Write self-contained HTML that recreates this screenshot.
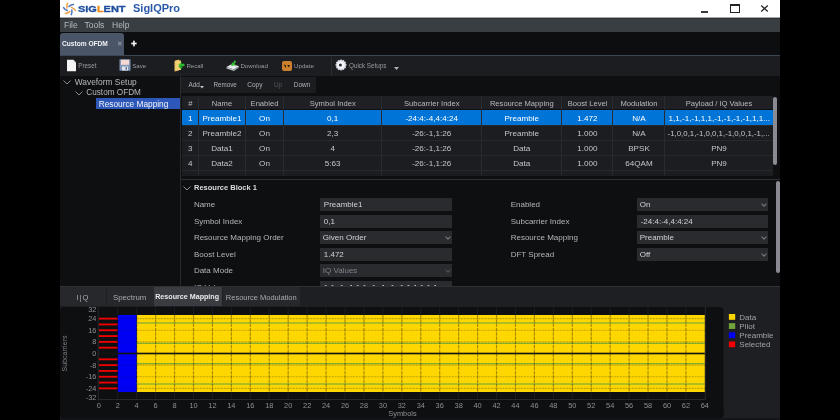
<!DOCTYPE html>
<html><head><meta charset="utf-8">
<style>
*{margin:0;padding:0;box-sizing:border-box}
html,body{width:840px;height:420px;overflow:hidden;background:#000;font-family:"Liberation Sans",sans-serif}
.a{position:absolute}
.t{position:absolute;white-space:nowrap;line-height:1}
#app{position:absolute;left:60px;top:0;width:720px;height:420px;background:#0e0f11;overflow:hidden;will-change:transform}
</style></head><body>
<div id="app">
  <!-- title bar -->
  <div class="a" style="left:0;top:0;width:720px;height:18px;background:#fff"></div>
  <div class="t" style="left:18px;top:4.2px;font-size:9.4px;font-weight:bold;color:#1d4d9e;transform:scaleX(1.17);transform-origin:0 0;-webkit-text-stroke:0.3px #1d4d9e">SIG<span style="color:#ee8c1c;-webkit-text-stroke:0.3px #ee8c1c">L</span>ENT</div>
  <div class="t" style="left:73px;top:3.3px;font-size:11px;font-weight:bold;color:#2b59aa">SigIQPro</div>
  <svg class="a" style="left:0;top:0" width="20" height="18" viewBox="0 0 20 18"><path d="M6.97 8.07 Q6.53 4.90 7.65 3.26" fill="none" stroke="#f0a040" stroke-width="1.5" stroke-linecap="round"/><path d="M8.99 6.43 Q11.51 4.47 13.49 4.61" fill="none" stroke="#4a78c0" stroke-width="1.5" stroke-linecap="round"/><path d="M11.42 7.36 Q14.38 8.56 15.25 10.35" fill="none" stroke="#f0a040" stroke-width="1.5" stroke-linecap="round"/><path d="M11.83 9.93 Q12.27 13.10 11.15 14.74" fill="none" stroke="#4a78c0" stroke-width="1.5" stroke-linecap="round"/><path d="M9.81 11.57 Q7.29 13.53 5.31 13.39" fill="none" stroke="#f0a040" stroke-width="1.5" stroke-linecap="round"/><path d="M7.38 10.64 Q4.42 9.44 3.55 7.65" fill="none" stroke="#4a78c0" stroke-width="1.5" stroke-linecap="round"/></svg>
  <!-- window buttons -->
  <div class="a" style="left:641px;top:11px;width:6.8px;height:1.5px;background:#3a3a3a"></div>
  <div class="a" style="left:670px;top:4px;width:10px;height:8.5px;border:1px solid #222;border-top-width:2px"></div>
  <svg class="a" style="left:700px;top:5px" width="9" height="7" viewBox="0 0 9 7"><path d="M1.2 0.6 L7.8 6.4 M7.8 0.6 L1.2 6.4" stroke="#2a2a2a" stroke-width="1.35"/></svg>

  <!-- menu bar -->
  <div class="a" style="left:0;top:17px;width:720px;height:1px;background:#a4a6a8"></div>
  <div class="a" style="left:0;top:18px;width:720px;height:14px;background:#393e43"></div>
  <div class="a" style="left:0;top:18px;width:720px;height:1px;background:#2f3338"></div>
  <div class="t" style="left:4px;top:21.2px;font-size:8.5px;color:#b6babe">File</div>
  <div class="t" style="left:24.5px;top:21.2px;font-size:8.5px;color:#b6babe">Tools</div>
  <div class="t" style="left:52px;top:21.2px;font-size:8.5px;color:#b6babe">Help</div>

  <!-- tab bar -->
  <div class="a" style="left:0;top:32px;width:720px;height:23px;background:#0d0e10"></div>
  <div class="a" style="left:0;top:33px;width:64px;height:22px;background:#4a5567;border-radius:3px 3px 0 0"></div>
  <div class="t" style="left:2px;top:40.5px;font-size:6.6px;font-weight:bold;color:#f0f2f4">Custom OFDM</div>
  <div class="t" style="left:56.5px;top:40px;font-size:7px;color:#a0a8b2">✕</div>
  <div class="t" style="left:70.8px;top:40.5px;font-size:6.5px;font-weight:bold;color:#f4f4f4">✚</div>
  <div class="a" style="left:0;top:55px;width:720px;height:1px;background:#3c4654"></div>

  <!-- toolbar -->
  <div class="a" style="left:0;top:56px;width:720px;height:20px;background:#1c1d20"></div>

  <!-- toolbar icons -->
  <svg class="a" style="left:6px;top:59px" width="11" height="13" viewBox="0 0 11 13">
    <path d="M1 0.8 H7.3 L10 3.5 V12.2 H1 Z" fill="#f4f4f4"/>
    <path d="M7.3 0.8 V3.5 H10" fill="#d8d8d8"/>
  </svg>
  <div class="t" style="left:18.2px;top:62.8px;font-size:6.3px;color:#9a9ca2">Preset</div>
  <svg class="a" style="left:58.5px;top:59.3px" width="12" height="12" viewBox="0 0 12 12">
    <rect x="0.5" y="0.3" width="11" height="11.4" fill="#8197b8"/>
    <rect x="2" y="0.8" width="8" height="5" fill="#f3d9d2"/>
    <rect x="3" y="7.5" width="6" height="4" fill="#dfe3ea"/>
    <rect x="6.5" y="8.2" width="1.5" height="2.5" fill="#5a6f90"/>
  </svg>
  <div class="t" style="left:72.2px;top:62.8px;font-size:6.1px;color:#9a9ca2">Save</div>
  <svg class="a" style="left:113.5px;top:59px" width="11" height="13" viewBox="0 0 11 13">
    <path d="M0.5 2 L5 0.5 V11.5 L0.5 12.5 Z" fill="#e8c060"/>
    <path d="M1.5 1.5 H7 V11 H1.5 Z" fill="#f0d070"/>
    <path d="M4.5 6 L7.5 3 V4.8 H10.5 V7.3 H7.5 V9 Z" fill="#2fb82f"/>
    <path d="M4 7 L7 10 L9 8 Z" fill="#1e9e1e"/>
  </svg>
  <div class="t" style="left:126.4px;top:62.8px;font-size:6.1px;color:#9a9ca2">Recall</div>
  <svg class="a" style="left:165.5px;top:59.5px" width="14" height="12" viewBox="0 0 14 12">
    <path d="M0.5 7 L5 4.5 L13 6 L8 9.5 Z" fill="#e8ecee"/>
    <path d="M0.5 7 L8 9.5 L8 11 L0.5 8.5 Z" fill="#b8bcc0"/>
    <path d="M8 9.5 L13 6 V7.5 L8 11 Z" fill="#9aa0a4"/>
    <path d="M8.5 0.3 L10.2 1.8 L8.3 3.8 L9.8 5 L5.2 6.2 L6 2.2 L7.2 3.2 Z" fill="#36c436"/>
  </svg>
  <div class="t" style="left:180.4px;top:62.8px;font-size:6.2px;color:#9a9ca2">Download</div>
  <div class="a" style="left:222px;top:60.6px;width:10px;height:10px;background:#cc812f;border-radius:2px"></div>
  <svg class="a" style="left:222px;top:60.6px" width="10" height="10" viewBox="0 0 10 10"><path d="M2.2 3.6 L3.6 5.6 M3.4 4.2 V6.4" stroke="#2a1a08" stroke-width="1"/><path d="M5.2 4 L8 4 L6.8 6.6 Z" fill="#2a1a08"/></svg>
  <div class="t" style="left:234px;top:62.8px;font-size:6.2px;color:#9a9ca2">Update</div>
  <div class="a" style="left:270.5px;top:57px;width:1px;height:18px;background:#2c2d31"></div>
  <svg class="a" style="left:275.4px;top:59.2px" width="12" height="12" viewBox="0 0 12 12"><rect x="5.2" y="0.5" width="1.6" height="1.6" fill="#d8d8ea" transform="rotate(0 6 6)"/><rect x="5.2" y="0.5" width="1.6" height="1.6" fill="#d8d8ea" transform="rotate(30 6 6)"/><rect x="5.2" y="0.5" width="1.6" height="1.6" fill="#d8d8ea" transform="rotate(60 6 6)"/><rect x="5.2" y="0.5" width="1.6" height="1.6" fill="#d8d8ea" transform="rotate(90 6 6)"/><rect x="5.2" y="0.5" width="1.6" height="1.6" fill="#d8d8ea" transform="rotate(120 6 6)"/><rect x="5.2" y="0.5" width="1.6" height="1.6" fill="#d8d8ea" transform="rotate(150 6 6)"/><rect x="5.2" y="0.5" width="1.6" height="1.6" fill="#d8d8ea" transform="rotate(180 6 6)"/><rect x="5.2" y="0.5" width="1.6" height="1.6" fill="#d8d8ea" transform="rotate(210 6 6)"/><rect x="5.2" y="0.5" width="1.6" height="1.6" fill="#d8d8ea" transform="rotate(240 6 6)"/><rect x="5.2" y="0.5" width="1.6" height="1.6" fill="#d8d8ea" transform="rotate(270 6 6)"/><rect x="5.2" y="0.5" width="1.6" height="1.6" fill="#d8d8ea" transform="rotate(300 6 6)"/><rect x="5.2" y="0.5" width="1.6" height="1.6" fill="#d8d8ea" transform="rotate(330 6 6)"/><circle cx="6" cy="6" r="4.8" fill="#e6e6f2"/><circle cx="6" cy="6" r="3.2" fill="#f6f6fb"/><circle cx="5.4" cy="6" r="1.5" fill="#2a2a34"/></svg>
  <div class="t" style="left:289px;top:62.8px;font-size:6.3px;color:#9a9ca2">Quick Setups</div>
  <svg class="a" style="left:333.5px;top:66.5px" width="5" height="3" viewBox="0 0 5 3"><path d="M0 0 H5 L2.5 3 Z" fill="#b0b2b8"/></svg>

  <!-- tree -->
  <div class="a" style="left:120px;top:76px;width:1px;height:210px;background:#2a2b2f"></div>
  <svg class="a" style="left:3px;top:80px" width="8" height="5" viewBox="0 0 8 5"><path d="M0.5 0.5 L4 4 L7.5 0.5" fill="none" stroke="#9a9a9e" stroke-width="0.9"/></svg>
  <div class="t" style="left:14.7px;top:78.3px;font-size:8.4px;color:#b8b8bc">Waveform Setup</div>
  <svg class="a" style="left:15px;top:91px" width="8" height="5" viewBox="0 0 8 5"><path d="M0.5 0.5 L4 4 L7.5 0.5" fill="none" stroke="#9a9a9e" stroke-width="0.9"/></svg>
  <div class="t" style="left:26.3px;top:89.4px;font-size:8.2px;color:#b8b8bc">Custom OFDM</div>
  <div class="a" style="left:36.2px;top:98.2px;width:83.8px;height:10.9px;background:#2d58b9"></div>
  <div class="t" style="left:38.7px;top:99.9px;font-size:8.3px;color:#f2f4f8">Resource Mapping</div>

  <!-- sub toolbar -->
  <div class="a" style="left:121px;top:77px;width:135px;height:16px;background:#1c1d20"></div>
  <div class="t" style="left:128.4px;top:81.8px;font-size:6.4px;color:#b0b2b8">Add</div>
  <svg class="a" style="left:139.5px;top:85.5px" width="4" height="3" viewBox="0 0 4 3"><path d="M0 0 H4 L2 2.5 Z" fill="#c0c2c8"/></svg>
  <div class="t" style="left:153.4px;top:81.8px;font-size:6.3px;color:#b0b2b8">Remove</div>
  <div class="t" style="left:187.3px;top:81.8px;font-size:6.5px;color:#b0b2b8">Copy</div>
  <div class="t" style="left:214px;top:81.8px;font-size:6.4px;color:#55575c">Up</div>
  <div class="t" style="left:233.8px;top:81.8px;font-size:6.5px;color:#b0b2b8">Down</div>

  <!-- table -->
  <div class="a" style="left:122px;top:96.3px;width:591px;height:13.2px;background:#1f2023"></div>
  <div class="a" style="left:122px;top:109.5px;width:591px;height:66px;background:#1c1d20"></div>
  <div class="a" style="left:122px;top:109.8px;width:591px;height:14.9px;background:#0174d7"></div>
  <div class="a" style="left:122px;top:125px;width:591px;height:1px;background:#28292d"></div>
  <div class="a" style="left:122px;top:140px;width:591px;height:1px;background:#28292d"></div>
  <div class="a" style="left:122px;top:155px;width:591px;height:1px;background:#28292d"></div>
  <div class="a" style="left:122px;top:170px;width:591px;height:1px;background:#28292d"></div>
  <div class="a" style="left:138px;top:96px;width:1px;height:79px;background:#2a2b2f"></div>
  <div class="a" style="left:185px;top:96px;width:1px;height:79px;background:#2a2b2f"></div>
  <div class="a" style="left:223px;top:96px;width:1px;height:79px;background:#2a2b2f"></div>
  <div class="a" style="left:321px;top:96px;width:1px;height:79px;background:#2a2b2f"></div>
  <div class="a" style="left:421px;top:96px;width:1px;height:79px;background:#2a2b2f"></div>
  <div class="a" style="left:501px;top:96px;width:1px;height:79px;background:#2a2b2f"></div>
  <div class="a" style="left:552px;top:96px;width:1px;height:79px;background:#2a2b2f"></div>
  <div class="a" style="left:604px;top:96px;width:1px;height:79px;background:#2a2b2f"></div>
  <div class="t" style="left:122px;width:16.5px;text-align:center;top:99.8px;font-size:7.6px;color:#b8babe">#</div>
  <div class="t" style="left:138.5px;width:47.0px;text-align:center;top:99.8px;font-size:7.6px;color:#b8babe">Name</div>
  <div class="t" style="left:185.5px;width:38.0px;text-align:center;top:99.8px;font-size:7.6px;color:#b8babe">Enabled</div>
  <div class="t" style="left:223.5px;width:98.5px;text-align:center;top:99.8px;font-size:7.6px;color:#b8babe">Symbol Index</div>
  <div class="t" style="left:322px;width:99.5px;text-align:center;top:99.8px;font-size:7.6px;color:#b8babe">Subcarrier Index</div>
  <div class="t" style="left:421.5px;width:80.5px;text-align:center;top:99.8px;font-size:7.6px;color:#b8babe">Resource Mapping</div>
  <div class="t" style="left:502px;width:51px;text-align:center;top:99.8px;font-size:7.6px;color:#b8babe">Boost Level</div>
  <div class="t" style="left:553px;width:52px;text-align:center;top:99.8px;font-size:7.6px;color:#b8babe">Modulation</div>
  <div class="t" style="left:605px;width:108px;text-align:center;top:99.8px;font-size:7.6px;color:#b8babe">Payload / IQ Values</div>
  <div class="t" style="left:122px;width:16.5px;text-align:center;top:114.5px;font-size:8.1px;color:#ffffff">1</div>
  <div class="t" style="left:138.5px;width:47.0px;text-align:center;top:114.5px;font-size:8.1px;color:#ffffff">Preamble1</div>
  <div class="t" style="left:185.5px;width:38.0px;text-align:center;top:114.5px;font-size:8.1px;color:#ffffff">On</div>
  <div class="t" style="left:223.5px;width:98.5px;text-align:center;top:114.5px;font-size:8.1px;color:#ffffff">0,1</div>
  <div class="t" style="left:322px;width:99.5px;text-align:center;top:114.5px;font-size:8.1px;color:#ffffff">-24:4:-4,4:4:24</div>
  <div class="t" style="left:421.5px;width:80.5px;text-align:center;top:114.5px;font-size:8.1px;color:#ffffff">Preamble</div>
  <div class="t" style="left:502px;width:51px;text-align:center;top:114.5px;font-size:8.1px;color:#ffffff">1.472</div>
  <div class="t" style="left:553px;width:52px;text-align:center;top:114.5px;font-size:8.1px;color:#ffffff">N/A</div>
  <div class="t" style="left:608.6px;top:114.5px;font-size:8.07px;color:#ffffff">1,1,-1,-1,1,1,-1,-1,-1,-1,1,1...</div>
  <div class="t" style="left:122px;width:16.5px;text-align:center;top:129.5px;font-size:8.1px;color:#c4c6ca">2</div>
  <div class="t" style="left:138.5px;width:47.0px;text-align:center;top:129.5px;font-size:8.1px;color:#c4c6ca">Preamble2</div>
  <div class="t" style="left:185.5px;width:38.0px;text-align:center;top:129.5px;font-size:8.1px;color:#c4c6ca">On</div>
  <div class="t" style="left:223.5px;width:98.5px;text-align:center;top:129.5px;font-size:8.1px;color:#c4c6ca">2,3</div>
  <div class="t" style="left:322px;width:99.5px;text-align:center;top:129.5px;font-size:8.1px;color:#c4c6ca">-26:-1,1:26</div>
  <div class="t" style="left:421.5px;width:80.5px;text-align:center;top:129.5px;font-size:8.1px;color:#c4c6ca">Preamble</div>
  <div class="t" style="left:502px;width:51px;text-align:center;top:129.5px;font-size:8.1px;color:#c4c6ca">1.000</div>
  <div class="t" style="left:553px;width:52px;text-align:center;top:129.5px;font-size:8.1px;color:#c4c6ca">N/A</div>
  <div class="t" style="left:607.6px;top:129.5px;font-size:7.85px;color:#c4c6ca">-1,0,0,1,-1,0,0,1,-1,0,0,1,-1,...</div>
  <div class="t" style="left:122px;width:16.5px;text-align:center;top:144.5px;font-size:8.1px;color:#c4c6ca">3</div>
  <div class="t" style="left:138.5px;width:47.0px;text-align:center;top:144.5px;font-size:8.1px;color:#c4c6ca">Data1</div>
  <div class="t" style="left:185.5px;width:38.0px;text-align:center;top:144.5px;font-size:8.1px;color:#c4c6ca">On</div>
  <div class="t" style="left:223.5px;width:98.5px;text-align:center;top:144.5px;font-size:8.1px;color:#c4c6ca">4</div>
  <div class="t" style="left:322px;width:99.5px;text-align:center;top:144.5px;font-size:8.1px;color:#c4c6ca">-26:-1,1:26</div>
  <div class="t" style="left:421.5px;width:80.5px;text-align:center;top:144.5px;font-size:8.1px;color:#c4c6ca">Data</div>
  <div class="t" style="left:502px;width:51px;text-align:center;top:144.5px;font-size:8.1px;color:#c4c6ca">1.000</div>
  <div class="t" style="left:553px;width:52px;text-align:center;top:144.5px;font-size:8.1px;color:#c4c6ca">BPSK</div>
  <div class="t" style="left:605px;width:108px;text-align:center;top:144.5px;font-size:8.1px;color:#c4c6ca">PN9</div>
  <div class="t" style="left:122px;width:16.5px;text-align:center;top:159.5px;font-size:8.1px;color:#c4c6ca">4</div>
  <div class="t" style="left:138.5px;width:47.0px;text-align:center;top:159.5px;font-size:8.1px;color:#c4c6ca">Data2</div>
  <div class="t" style="left:185.5px;width:38.0px;text-align:center;top:159.5px;font-size:8.1px;color:#c4c6ca">On</div>
  <div class="t" style="left:223.5px;width:98.5px;text-align:center;top:159.5px;font-size:8.1px;color:#c4c6ca">5:63</div>
  <div class="t" style="left:322px;width:99.5px;text-align:center;top:159.5px;font-size:8.1px;color:#c4c6ca">-26:-1,1:26</div>
  <div class="t" style="left:421.5px;width:80.5px;text-align:center;top:159.5px;font-size:8.1px;color:#c4c6ca">Data</div>
  <div class="t" style="left:502px;width:51px;text-align:center;top:159.5px;font-size:8.1px;color:#c4c6ca">1.000</div>
  <div class="t" style="left:553px;width:52px;text-align:center;top:159.5px;font-size:8.1px;color:#c4c6ca">64QAM</div>
  <div class="t" style="left:605px;width:108px;text-align:center;top:159.5px;font-size:8.1px;color:#c4c6ca">PN9</div>
  <div class="a" style="left:713px;top:96.5px;width:3.5px;height:68px;background:#8a8a92;border-radius:2px"></div>
  <div class="a" style="left:121px;top:179px;width:599px;height:1px;background:#2c2f35"></div>

  <!-- resource block panel -->
  <svg class="a" style="left:123px;top:185.5px" width="8" height="5" viewBox="0 0 8 5"><path d="M0.5 0.5 L4 4 L7.5 0.5" fill="none" stroke="#a0a0a4" stroke-width="0.9"/></svg>
  <div class="t" style="left:134px;top:184px;font-size:7.5px;font-weight:bold;color:#dcdde0">Resource Block 1</div>
  <div class="t" style="left:133.9px;top:201.2px;font-size:8px;color:#b4b6ba">Name</div>
  <div class="a" style="left:259.8px;top:198px;width:132.2px;height:13.4px;background:#2a2b2f"></div>
  <div class="t" style="left:263.8px;top:201.3px;font-size:8px;color:#d0d2d6">Preamble1</div>
  <div class="t" style="left:133.9px;top:217.7px;font-size:8px;color:#b4b6ba">Symbol Index</div>
  <div class="a" style="left:259.8px;top:214.5px;width:132.2px;height:13.4px;background:#2a2b2f"></div>
  <div class="t" style="left:263.8px;top:217.8px;font-size:8px;color:#d0d2d6">0,1</div>
  <div class="t" style="left:133.9px;top:234.2px;font-size:8px;color:#b4b6ba">Resource Mapping Order</div>
  <div class="a" style="left:259.8px;top:231px;width:132.2px;height:13.4px;background:#2a2b2f"></div>
  <div class="t" style="left:262.8px;top:234.3px;font-size:8px;color:#d0d2d6">Given Order</div>
  <svg class="a" style="left:384.7px;top:236.4px" width="6" height="4" viewBox="0 0 6 4"><path d="M0.6 0.6 L3 3.1 L5.4 0.6" fill="none" stroke="#76787e" stroke-width="1.1"/></svg>
  <div class="t" style="left:133.9px;top:250.7px;font-size:8px;color:#b4b6ba">Boost Level</div>
  <div class="a" style="left:259.8px;top:247.5px;width:132.2px;height:13.4px;background:#2a2b2f"></div>
  <div class="t" style="left:263.8px;top:250.8px;font-size:8px;color:#d0d2d6">1.472</div>
  <div class="t" style="left:133.9px;top:267.2px;font-size:8px;color:#b4b6ba">Data Mode</div>
  <div class="a" style="left:259.8px;top:264px;width:132.2px;height:13.4px;background:#2a2b2f"></div>
  <div class="t" style="left:262.8px;top:267.3px;font-size:8px;color:#808288">IQ Values</div>
  <svg class="a" style="left:384.7px;top:269.4px" width="6" height="4" viewBox="0 0 6 4"><path d="M0.6 0.6 L3 3.1 L5.4 0.6" fill="none" stroke="#505257" stroke-width="1.1"/></svg>
  <div class="t" style="left:133.9px;top:283.7px;font-size:8px;color:#b4b6ba">IQ Values</div>
  <div class="a" style="left:259.8px;top:280.5px;width:132.2px;height:13.4px;background:#2a2b2f"></div>
  <div class="t" style="left:263.8px;top:283.8px;font-size:8px;color:#d0d2d6">1,1,-1,-1,1,1,-1,-1,-1,-1,1,1,1,1,1</div>
  <div class="t" style="left:450.7px;top:201.2px;font-size:8px;color:#b4b6ba">Enabled</div>
  <div class="a" style="left:576.7px;top:198px;width:131.3px;height:13.4px;background:#2a2b2f"></div>
  <div class="t" style="left:579.7px;top:201.3px;font-size:8px;color:#d0d2d6">On</div>
  <svg class="a" style="left:700.7px;top:203.4px" width="6" height="4" viewBox="0 0 6 4"><path d="M0.6 0.6 L3 3.1 L5.4 0.6" fill="none" stroke="#76787e" stroke-width="1.1"/></svg>
  <div class="t" style="left:450.7px;top:217.7px;font-size:8px;color:#b4b6ba">Subcarrier Index</div>
  <div class="a" style="left:576.7px;top:214.5px;width:131.3px;height:13.4px;background:#2a2b2f"></div>
  <div class="t" style="left:580.7px;top:217.8px;font-size:8px;color:#d0d2d6">-24:4:-4,4:4:24</div>
  <div class="t" style="left:450.7px;top:234.2px;font-size:8px;color:#b4b6ba">Resource Mapping</div>
  <div class="a" style="left:576.7px;top:231px;width:131.3px;height:13.4px;background:#2a2b2f"></div>
  <div class="t" style="left:579.7px;top:234.3px;font-size:8px;color:#d0d2d6">Preamble</div>
  <svg class="a" style="left:700.7px;top:236.4px" width="6" height="4" viewBox="0 0 6 4"><path d="M0.6 0.6 L3 3.1 L5.4 0.6" fill="none" stroke="#76787e" stroke-width="1.1"/></svg>
  <div class="t" style="left:450.7px;top:250.7px;font-size:8px;color:#b4b6ba">DFT Spread</div>
  <div class="a" style="left:576.7px;top:247.5px;width:131.3px;height:13.4px;background:#2a2b2f"></div>
  <div class="t" style="left:579.7px;top:250.8px;font-size:8px;color:#d0d2d6">Off</div>
  <svg class="a" style="left:700.7px;top:252.9px" width="6" height="4" viewBox="0 0 6 4"><path d="M0.6 0.6 L3 3.1 L5.4 0.6" fill="none" stroke="#76787e" stroke-width="1.1"/></svg>
  <div class="a" style="left:716px;top:181.4px;width:3.8px;height:91.2px;background:#8a8a92;border-radius:2px"></div>

  <!-- bottom tab bar -->
  <div class="a" style="left:0;top:286px;width:720px;height:1px;background:#2f3135"></div>
  <div class="a" style="left:0;top:287px;width:720px;height:19px;background:#1e1f22"></div>
  <div class="a" style="left:0;top:287px;width:46px;height:19px;background:#27282c"></div>
  <div class="a" style="left:47px;top:287px;width:46.5px;height:19px;background:#27282c"></div>
  <div class="a" style="left:94px;top:286.5px;width:67.5px;height:19.5px;background:#3a3c41"></div>
  <div class="a" style="left:162.5px;top:287px;width:77.5px;height:19px;background:#27282c"></div>
  <div class="t" style="left:0;width:46px;text-align:center;top:293.8px;font-size:7.6px;letter-spacing:1px;color:#a8aaae">I|Q</div>
  <div class="t" style="left:53px;top:293.8px;font-size:7.8px;color:#a8aaae">Spectrum</div>
  <div class="t" style="left:95.2px;top:293.6px;font-size:7.15px;font-weight:bold;color:#e8e9ec">Resource Mapping</div>
  <div class="t" style="left:165.8px;top:293.8px;font-size:7.5px;color:#a8aaae">Resource Modulation</div>
  <!-- chart -->
  <svg class="a" style="left:0;top:306px;font-family:'Liberation Sans',sans-serif" width="720" height="114" viewBox="0 0 720 114">
    <rect x="0" y="0" width="720" height="114" fill="#1e1f22"/>
    <rect x="0" y="1" width="663.5" height="111.2" rx="4" fill="#0e0f11"/>
    <rect x="0" y="112" width="720" height="2" fill="#141518"/>
    <rect x="0" y="100" width="663.5" height="12.2" rx="4" fill="#0e0f11"/>
    <rect x="76.68" y="8.99" width="568.20" height="77.01" fill="#ffd700"/>
    <rect x="57.74" y="8.99" width="18.94" height="77.01" fill="#0000f5"/>
    <rect x="76.68" y="16.41" width="568.20" height="1.15" fill="#76a838"/>
    <rect x="76.68" y="36.75" width="568.20" height="1.15" fill="#76a838"/>
    <rect x="76.68" y="57.10" width="568.20" height="1.15" fill="#76a838"/>
    <rect x="76.68" y="77.44" width="568.20" height="1.15" fill="#76a838"/>
    <rect x="38.80" y="46.67" width="606.08" height="1.65" fill="#141414"/>
    <rect x="38.80" y="81.45" width="18.94" height="1.85" fill="#f00000"/>
    <rect x="38.80" y="75.64" width="18.94" height="1.85" fill="#f00000"/>
    <rect x="38.80" y="69.82" width="18.94" height="1.85" fill="#f00000"/>
    <rect x="38.80" y="64.01" width="18.94" height="1.85" fill="#f00000"/>
    <rect x="38.80" y="58.20" width="18.94" height="1.85" fill="#f00000"/>
    <rect x="38.80" y="52.39" width="18.94" height="1.85" fill="#f00000"/>
    <rect x="38.80" y="40.76" width="18.94" height="1.85" fill="#f00000"/>
    <rect x="38.80" y="34.95" width="18.94" height="1.85" fill="#f00000"/>
    <rect x="38.80" y="29.14" width="18.94" height="1.85" fill="#f00000"/>
    <rect x="38.80" y="23.32" width="18.94" height="1.85" fill="#f00000"/>
    <rect x="38.80" y="17.51" width="18.94" height="1.85" fill="#f00000"/>
    <rect x="38.80" y="11.70" width="18.94" height="1.85" fill="#f00000"/>
    <line x1="57.74" y1="8.99" x2="57.74" y2="86.01" stroke="#000" stroke-opacity="0.34" stroke-width="1.2" stroke-dasharray="3.5 0.8"/>
    <line x1="57.74" y1="1" x2="57.74" y2="8.99" stroke="#1c1d20" stroke-width="1"/>
    <line x1="57.74" y1="86.01" x2="57.74" y2="94.00" stroke="#1c1d20" stroke-width="1"/>
    <line x1="76.68" y1="8.99" x2="76.68" y2="86.01" stroke="#000" stroke-opacity="0.34" stroke-width="1.2" stroke-dasharray="3.5 0.8"/>
    <line x1="76.68" y1="1" x2="76.68" y2="8.99" stroke="#1c1d20" stroke-width="1"/>
    <line x1="76.68" y1="86.01" x2="76.68" y2="94.00" stroke="#1c1d20" stroke-width="1"/>
    <line x1="95.62" y1="8.99" x2="95.62" y2="86.01" stroke="#000" stroke-opacity="0.34" stroke-width="1.2" stroke-dasharray="3.5 0.8"/>
    <line x1="95.62" y1="1" x2="95.62" y2="8.99" stroke="#1c1d20" stroke-width="1"/>
    <line x1="95.62" y1="86.01" x2="95.62" y2="94.00" stroke="#1c1d20" stroke-width="1"/>
    <line x1="114.56" y1="8.99" x2="114.56" y2="86.01" stroke="#000" stroke-opacity="0.34" stroke-width="1.2" stroke-dasharray="3.5 0.8"/>
    <line x1="114.56" y1="1" x2="114.56" y2="8.99" stroke="#1c1d20" stroke-width="1"/>
    <line x1="114.56" y1="86.01" x2="114.56" y2="94.00" stroke="#1c1d20" stroke-width="1"/>
    <line x1="133.50" y1="8.99" x2="133.50" y2="86.01" stroke="#000" stroke-opacity="0.34" stroke-width="1.2" stroke-dasharray="3.5 0.8"/>
    <line x1="133.50" y1="1" x2="133.50" y2="8.99" stroke="#1c1d20" stroke-width="1"/>
    <line x1="133.50" y1="86.01" x2="133.50" y2="94.00" stroke="#1c1d20" stroke-width="1"/>
    <line x1="152.44" y1="8.99" x2="152.44" y2="86.01" stroke="#000" stroke-opacity="0.34" stroke-width="1.2" stroke-dasharray="3.5 0.8"/>
    <line x1="152.44" y1="1" x2="152.44" y2="8.99" stroke="#1c1d20" stroke-width="1"/>
    <line x1="152.44" y1="86.01" x2="152.44" y2="94.00" stroke="#1c1d20" stroke-width="1"/>
    <line x1="171.38" y1="8.99" x2="171.38" y2="86.01" stroke="#000" stroke-opacity="0.34" stroke-width="1.2" stroke-dasharray="3.5 0.8"/>
    <line x1="171.38" y1="1" x2="171.38" y2="8.99" stroke="#1c1d20" stroke-width="1"/>
    <line x1="171.38" y1="86.01" x2="171.38" y2="94.00" stroke="#1c1d20" stroke-width="1"/>
    <line x1="190.32" y1="8.99" x2="190.32" y2="86.01" stroke="#000" stroke-opacity="0.34" stroke-width="1.2" stroke-dasharray="3.5 0.8"/>
    <line x1="190.32" y1="1" x2="190.32" y2="8.99" stroke="#1c1d20" stroke-width="1"/>
    <line x1="190.32" y1="86.01" x2="190.32" y2="94.00" stroke="#1c1d20" stroke-width="1"/>
    <line x1="209.26" y1="8.99" x2="209.26" y2="86.01" stroke="#000" stroke-opacity="0.34" stroke-width="1.2" stroke-dasharray="3.5 0.8"/>
    <line x1="209.26" y1="1" x2="209.26" y2="8.99" stroke="#1c1d20" stroke-width="1"/>
    <line x1="209.26" y1="86.01" x2="209.26" y2="94.00" stroke="#1c1d20" stroke-width="1"/>
    <line x1="228.20" y1="8.99" x2="228.20" y2="86.01" stroke="#000" stroke-opacity="0.34" stroke-width="1.2" stroke-dasharray="3.5 0.8"/>
    <line x1="228.20" y1="1" x2="228.20" y2="8.99" stroke="#1c1d20" stroke-width="1"/>
    <line x1="228.20" y1="86.01" x2="228.20" y2="94.00" stroke="#1c1d20" stroke-width="1"/>
    <line x1="247.14" y1="8.99" x2="247.14" y2="86.01" stroke="#000" stroke-opacity="0.34" stroke-width="1.2" stroke-dasharray="3.5 0.8"/>
    <line x1="247.14" y1="1" x2="247.14" y2="8.99" stroke="#1c1d20" stroke-width="1"/>
    <line x1="247.14" y1="86.01" x2="247.14" y2="94.00" stroke="#1c1d20" stroke-width="1"/>
    <line x1="266.08" y1="8.99" x2="266.08" y2="86.01" stroke="#000" stroke-opacity="0.34" stroke-width="1.2" stroke-dasharray="3.5 0.8"/>
    <line x1="266.08" y1="1" x2="266.08" y2="8.99" stroke="#1c1d20" stroke-width="1"/>
    <line x1="266.08" y1="86.01" x2="266.08" y2="94.00" stroke="#1c1d20" stroke-width="1"/>
    <line x1="285.02" y1="8.99" x2="285.02" y2="86.01" stroke="#000" stroke-opacity="0.34" stroke-width="1.2" stroke-dasharray="3.5 0.8"/>
    <line x1="285.02" y1="1" x2="285.02" y2="8.99" stroke="#1c1d20" stroke-width="1"/>
    <line x1="285.02" y1="86.01" x2="285.02" y2="94.00" stroke="#1c1d20" stroke-width="1"/>
    <line x1="303.96" y1="8.99" x2="303.96" y2="86.01" stroke="#000" stroke-opacity="0.34" stroke-width="1.2" stroke-dasharray="3.5 0.8"/>
    <line x1="303.96" y1="1" x2="303.96" y2="8.99" stroke="#1c1d20" stroke-width="1"/>
    <line x1="303.96" y1="86.01" x2="303.96" y2="94.00" stroke="#1c1d20" stroke-width="1"/>
    <line x1="322.90" y1="8.99" x2="322.90" y2="86.01" stroke="#000" stroke-opacity="0.34" stroke-width="1.2" stroke-dasharray="3.5 0.8"/>
    <line x1="322.90" y1="1" x2="322.90" y2="8.99" stroke="#1c1d20" stroke-width="1"/>
    <line x1="322.90" y1="86.01" x2="322.90" y2="94.00" stroke="#1c1d20" stroke-width="1"/>
    <line x1="341.84" y1="8.99" x2="341.84" y2="86.01" stroke="#000" stroke-opacity="0.34" stroke-width="1.2" stroke-dasharray="3.5 0.8"/>
    <line x1="341.84" y1="1" x2="341.84" y2="8.99" stroke="#1c1d20" stroke-width="1"/>
    <line x1="341.84" y1="86.01" x2="341.84" y2="94.00" stroke="#1c1d20" stroke-width="1"/>
    <line x1="360.78" y1="8.99" x2="360.78" y2="86.01" stroke="#000" stroke-opacity="0.34" stroke-width="1.2" stroke-dasharray="3.5 0.8"/>
    <line x1="360.78" y1="1" x2="360.78" y2="8.99" stroke="#1c1d20" stroke-width="1"/>
    <line x1="360.78" y1="86.01" x2="360.78" y2="94.00" stroke="#1c1d20" stroke-width="1"/>
    <line x1="379.72" y1="8.99" x2="379.72" y2="86.01" stroke="#000" stroke-opacity="0.34" stroke-width="1.2" stroke-dasharray="3.5 0.8"/>
    <line x1="379.72" y1="1" x2="379.72" y2="8.99" stroke="#1c1d20" stroke-width="1"/>
    <line x1="379.72" y1="86.01" x2="379.72" y2="94.00" stroke="#1c1d20" stroke-width="1"/>
    <line x1="398.66" y1="8.99" x2="398.66" y2="86.01" stroke="#000" stroke-opacity="0.34" stroke-width="1.2" stroke-dasharray="3.5 0.8"/>
    <line x1="398.66" y1="1" x2="398.66" y2="8.99" stroke="#1c1d20" stroke-width="1"/>
    <line x1="398.66" y1="86.01" x2="398.66" y2="94.00" stroke="#1c1d20" stroke-width="1"/>
    <line x1="417.60" y1="8.99" x2="417.60" y2="86.01" stroke="#000" stroke-opacity="0.34" stroke-width="1.2" stroke-dasharray="3.5 0.8"/>
    <line x1="417.60" y1="1" x2="417.60" y2="8.99" stroke="#1c1d20" stroke-width="1"/>
    <line x1="417.60" y1="86.01" x2="417.60" y2="94.00" stroke="#1c1d20" stroke-width="1"/>
    <line x1="436.54" y1="8.99" x2="436.54" y2="86.01" stroke="#000" stroke-opacity="0.34" stroke-width="1.2" stroke-dasharray="3.5 0.8"/>
    <line x1="436.54" y1="1" x2="436.54" y2="8.99" stroke="#1c1d20" stroke-width="1"/>
    <line x1="436.54" y1="86.01" x2="436.54" y2="94.00" stroke="#1c1d20" stroke-width="1"/>
    <line x1="455.48" y1="8.99" x2="455.48" y2="86.01" stroke="#000" stroke-opacity="0.34" stroke-width="1.2" stroke-dasharray="3.5 0.8"/>
    <line x1="455.48" y1="1" x2="455.48" y2="8.99" stroke="#1c1d20" stroke-width="1"/>
    <line x1="455.48" y1="86.01" x2="455.48" y2="94.00" stroke="#1c1d20" stroke-width="1"/>
    <line x1="474.42" y1="8.99" x2="474.42" y2="86.01" stroke="#000" stroke-opacity="0.34" stroke-width="1.2" stroke-dasharray="3.5 0.8"/>
    <line x1="474.42" y1="1" x2="474.42" y2="8.99" stroke="#1c1d20" stroke-width="1"/>
    <line x1="474.42" y1="86.01" x2="474.42" y2="94.00" stroke="#1c1d20" stroke-width="1"/>
    <line x1="493.36" y1="8.99" x2="493.36" y2="86.01" stroke="#000" stroke-opacity="0.34" stroke-width="1.2" stroke-dasharray="3.5 0.8"/>
    <line x1="493.36" y1="1" x2="493.36" y2="8.99" stroke="#1c1d20" stroke-width="1"/>
    <line x1="493.36" y1="86.01" x2="493.36" y2="94.00" stroke="#1c1d20" stroke-width="1"/>
    <line x1="512.30" y1="8.99" x2="512.30" y2="86.01" stroke="#000" stroke-opacity="0.34" stroke-width="1.2" stroke-dasharray="3.5 0.8"/>
    <line x1="512.30" y1="1" x2="512.30" y2="8.99" stroke="#1c1d20" stroke-width="1"/>
    <line x1="512.30" y1="86.01" x2="512.30" y2="94.00" stroke="#1c1d20" stroke-width="1"/>
    <line x1="531.24" y1="8.99" x2="531.24" y2="86.01" stroke="#000" stroke-opacity="0.34" stroke-width="1.2" stroke-dasharray="3.5 0.8"/>
    <line x1="531.24" y1="1" x2="531.24" y2="8.99" stroke="#1c1d20" stroke-width="1"/>
    <line x1="531.24" y1="86.01" x2="531.24" y2="94.00" stroke="#1c1d20" stroke-width="1"/>
    <line x1="550.18" y1="8.99" x2="550.18" y2="86.01" stroke="#000" stroke-opacity="0.34" stroke-width="1.2" stroke-dasharray="3.5 0.8"/>
    <line x1="550.18" y1="1" x2="550.18" y2="8.99" stroke="#1c1d20" stroke-width="1"/>
    <line x1="550.18" y1="86.01" x2="550.18" y2="94.00" stroke="#1c1d20" stroke-width="1"/>
    <line x1="569.12" y1="8.99" x2="569.12" y2="86.01" stroke="#000" stroke-opacity="0.34" stroke-width="1.2" stroke-dasharray="3.5 0.8"/>
    <line x1="569.12" y1="1" x2="569.12" y2="8.99" stroke="#1c1d20" stroke-width="1"/>
    <line x1="569.12" y1="86.01" x2="569.12" y2="94.00" stroke="#1c1d20" stroke-width="1"/>
    <line x1="588.06" y1="8.99" x2="588.06" y2="86.01" stroke="#000" stroke-opacity="0.34" stroke-width="1.2" stroke-dasharray="3.5 0.8"/>
    <line x1="588.06" y1="1" x2="588.06" y2="8.99" stroke="#1c1d20" stroke-width="1"/>
    <line x1="588.06" y1="86.01" x2="588.06" y2="94.00" stroke="#1c1d20" stroke-width="1"/>
    <line x1="607.00" y1="8.99" x2="607.00" y2="86.01" stroke="#000" stroke-opacity="0.34" stroke-width="1.2" stroke-dasharray="3.5 0.8"/>
    <line x1="607.00" y1="1" x2="607.00" y2="8.99" stroke="#1c1d20" stroke-width="1"/>
    <line x1="607.00" y1="86.01" x2="607.00" y2="94.00" stroke="#1c1d20" stroke-width="1"/>
    <line x1="625.94" y1="8.99" x2="625.94" y2="86.01" stroke="#000" stroke-opacity="0.34" stroke-width="1.2" stroke-dasharray="3.5 0.8"/>
    <line x1="625.94" y1="1" x2="625.94" y2="8.99" stroke="#1c1d20" stroke-width="1"/>
    <line x1="625.94" y1="86.01" x2="625.94" y2="94.00" stroke="#1c1d20" stroke-width="1"/>
    <line x1="57.74" y1="12.63" x2="76.68" y2="12.63" stroke="#000" stroke-opacity="0.15" stroke-width="1" stroke-dasharray="2 1"/>
    <line x1="76.68" y1="12.63" x2="644.88" y2="12.63" stroke="#000" stroke-opacity="0.24" stroke-width="1.2" stroke-dasharray="2 1"/>
    <line x1="57.74" y1="24.25" x2="76.68" y2="24.25" stroke="#000" stroke-opacity="0.15" stroke-width="1" stroke-dasharray="2 1"/>
    <line x1="76.68" y1="24.25" x2="644.88" y2="24.25" stroke="#000" stroke-opacity="0.24" stroke-width="1.2" stroke-dasharray="2 1"/>
    <line x1="57.74" y1="35.88" x2="76.68" y2="35.88" stroke="#000" stroke-opacity="0.15" stroke-width="1" stroke-dasharray="2 1"/>
    <line x1="76.68" y1="35.88" x2="644.88" y2="35.88" stroke="#000" stroke-opacity="0.24" stroke-width="1.2" stroke-dasharray="2 1"/>
    <line x1="57.74" y1="59.12" x2="76.68" y2="59.12" stroke="#000" stroke-opacity="0.15" stroke-width="1" stroke-dasharray="2 1"/>
    <line x1="76.68" y1="59.12" x2="644.88" y2="59.12" stroke="#000" stroke-opacity="0.24" stroke-width="1.2" stroke-dasharray="2 1"/>
    <line x1="57.74" y1="70.75" x2="76.68" y2="70.75" stroke="#000" stroke-opacity="0.15" stroke-width="1" stroke-dasharray="2 1"/>
    <line x1="76.68" y1="70.75" x2="644.88" y2="70.75" stroke="#000" stroke-opacity="0.24" stroke-width="1.2" stroke-dasharray="2 1"/>
    <line x1="57.74" y1="82.37" x2="76.68" y2="82.37" stroke="#000" stroke-opacity="0.15" stroke-width="1" stroke-dasharray="2 1"/>
    <line x1="76.68" y1="82.37" x2="644.88" y2="82.37" stroke="#000" stroke-opacity="0.24" stroke-width="1.2" stroke-dasharray="2 1"/>
    <line x1="38.30" y1="1" x2="38.30" y2="94.50" stroke="#26282c" stroke-width="1"/>
    <line x1="645.38" y1="1" x2="645.38" y2="93.50" stroke="#26282c" stroke-width="1"/>
    <line x1="38.30" y1="93.50" x2="645.38" y2="93.50" stroke="#26282c" stroke-width="1"/>
    <text x="36.30" y="6.00" text-anchor="end" font-size="7.3" fill="#8e9094">32</text>
    <text x="36.30" y="15.03" text-anchor="end" font-size="7.3" fill="#8e9094">24</text>
    <text x="36.30" y="26.65" text-anchor="end" font-size="7.3" fill="#8e9094">16</text>
    <text x="36.30" y="38.28" text-anchor="end" font-size="7.3" fill="#8e9094">8</text>
    <text x="36.30" y="49.90" text-anchor="end" font-size="7.3" fill="#8e9094">0</text>
    <text x="36.30" y="61.52" text-anchor="end" font-size="7.3" fill="#8e9094">-8</text>
    <text x="36.30" y="73.15" text-anchor="end" font-size="7.3" fill="#8e9094">-16</text>
    <text x="36.30" y="84.77" text-anchor="end" font-size="7.3" fill="#8e9094">-24</text>
    <text x="36.30" y="94.00" text-anchor="end" font-size="7.3" fill="#8e9094">-32</text>
    <text x="38.80" y="101.9" text-anchor="middle" font-size="7.4" fill="#8e9094">0</text>
    <text x="57.74" y="101.9" text-anchor="middle" font-size="7.4" fill="#8e9094">2</text>
    <text x="76.68" y="101.9" text-anchor="middle" font-size="7.4" fill="#8e9094">4</text>
    <text x="95.62" y="101.9" text-anchor="middle" font-size="7.4" fill="#8e9094">6</text>
    <text x="114.56" y="101.9" text-anchor="middle" font-size="7.4" fill="#8e9094">8</text>
    <text x="133.50" y="101.9" text-anchor="middle" font-size="7.4" fill="#8e9094">10</text>
    <text x="152.44" y="101.9" text-anchor="middle" font-size="7.4" fill="#8e9094">12</text>
    <text x="171.38" y="101.9" text-anchor="middle" font-size="7.4" fill="#8e9094">14</text>
    <text x="190.32" y="101.9" text-anchor="middle" font-size="7.4" fill="#8e9094">16</text>
    <text x="209.26" y="101.9" text-anchor="middle" font-size="7.4" fill="#8e9094">18</text>
    <text x="228.20" y="101.9" text-anchor="middle" font-size="7.4" fill="#8e9094">20</text>
    <text x="247.14" y="101.9" text-anchor="middle" font-size="7.4" fill="#8e9094">22</text>
    <text x="266.08" y="101.9" text-anchor="middle" font-size="7.4" fill="#8e9094">24</text>
    <text x="285.02" y="101.9" text-anchor="middle" font-size="7.4" fill="#8e9094">26</text>
    <text x="303.96" y="101.9" text-anchor="middle" font-size="7.4" fill="#8e9094">28</text>
    <text x="322.90" y="101.9" text-anchor="middle" font-size="7.4" fill="#8e9094">30</text>
    <text x="341.84" y="101.9" text-anchor="middle" font-size="7.4" fill="#8e9094">32</text>
    <text x="360.78" y="101.9" text-anchor="middle" font-size="7.4" fill="#8e9094">34</text>
    <text x="379.72" y="101.9" text-anchor="middle" font-size="7.4" fill="#8e9094">36</text>
    <text x="398.66" y="101.9" text-anchor="middle" font-size="7.4" fill="#8e9094">38</text>
    <text x="417.60" y="101.9" text-anchor="middle" font-size="7.4" fill="#8e9094">40</text>
    <text x="436.54" y="101.9" text-anchor="middle" font-size="7.4" fill="#8e9094">42</text>
    <text x="455.48" y="101.9" text-anchor="middle" font-size="7.4" fill="#8e9094">44</text>
    <text x="474.42" y="101.9" text-anchor="middle" font-size="7.4" fill="#8e9094">46</text>
    <text x="493.36" y="101.9" text-anchor="middle" font-size="7.4" fill="#8e9094">48</text>
    <text x="512.30" y="101.9" text-anchor="middle" font-size="7.4" fill="#8e9094">50</text>
    <text x="531.24" y="101.9" text-anchor="middle" font-size="7.4" fill="#8e9094">52</text>
    <text x="550.18" y="101.9" text-anchor="middle" font-size="7.4" fill="#8e9094">54</text>
    <text x="569.12" y="101.9" text-anchor="middle" font-size="7.4" fill="#8e9094">56</text>
    <text x="588.06" y="101.9" text-anchor="middle" font-size="7.4" fill="#8e9094">58</text>
    <text x="607.00" y="101.9" text-anchor="middle" font-size="7.4" fill="#8e9094">60</text>
    <text x="625.94" y="101.9" text-anchor="middle" font-size="7.4" fill="#8e9094">62</text>
    <text x="644.88" y="101.9" text-anchor="middle" font-size="7.4" fill="#8e9094">64</text>
    <text x="342.5" y="110.2" text-anchor="middle" font-size="7.4" fill="#8e9094">Symbols</text>
    <text transform="translate(7.2,47.50) rotate(-90)" x="0" y="0" text-anchor="middle" font-size="7" fill="#7e8084">Subcarriers</text>
    <rect x="668.9" y="8.00" width="6.3" height="5.8" fill="#ffd700"/>
    <text x="679.3" y="13.60" font-size="8" fill="#a0a2a6">Data</text>
    <rect x="668.9" y="17.15" width="6.3" height="5.8" fill="#6fa53a"/>
    <text x="679.3" y="22.75" font-size="8" fill="#a0a2a6">Pilot</text>
    <rect x="668.9" y="26.30" width="6.3" height="5.8" fill="#0000f5"/>
    <text x="679.3" y="31.90" font-size="8" fill="#a0a2a6">Preamble</text>
    <rect x="668.9" y="35.45" width="6.3" height="5.8" fill="#f00000"/>
    <text x="679.3" y="41.05" font-size="8" fill="#a0a2a6">Selected</text>
  </svg>
</div>
</body></html>
